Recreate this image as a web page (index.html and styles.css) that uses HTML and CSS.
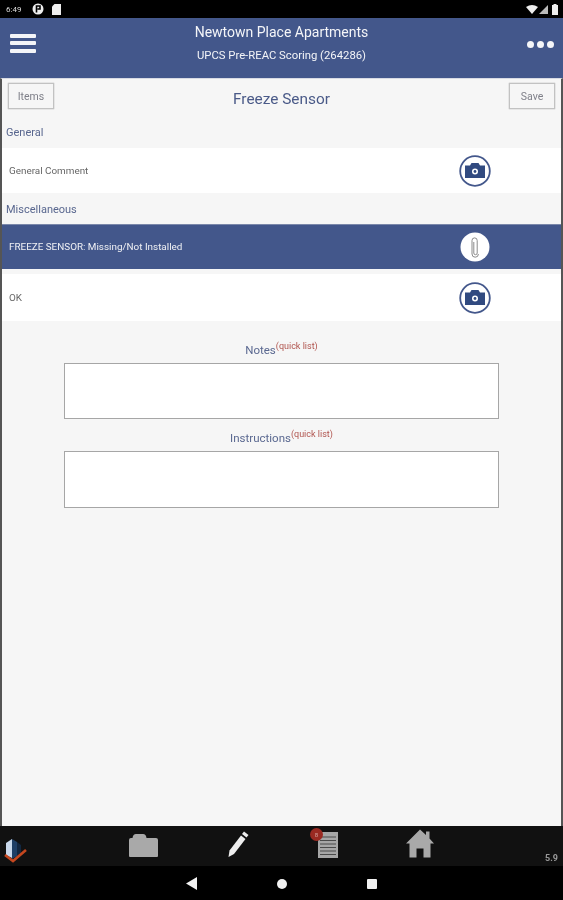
FILE: index.html
```html
<!DOCTYPE html>
<html lang="en">
<head>
<meta charset="utf-8">
<title>Freeze Sensor</title>
<link rel="stylesheet" href="styles.css">
</head>
<body>
<div class="screen">
  <div class="status">
    <span class="time">6:49</span>
    <svg class="st-p" viewBox="0 0 12 12"><circle cx="6" cy="6" r="5.5" fill="#eee"/><path d="M4.5 9.5V3H8v3H5.5" fill="none" stroke="#000" stroke-width="1.6"/></svg>
    <svg class="st-sd" viewBox="0 0 9 11"><path d="M2.5 0H9v11H0V2.5z" fill="#eee"/></svg>
    <span class="st-space"></span>
    <svg class="st-wifi" viewBox="0 0 12 9"><path d="M0 2Q6-2 12 2L6 9z" fill="#eee"/></svg>
    <svg class="st-cell" viewBox="0 0 9 9"><path d="M9 0V9H0z" fill="#bbb"/></svg>
    <svg class="st-batt" viewBox="0 0 6 11"><path d="M1.5 0h3v1H6v10H0V1h1.500z" fill="#eee"/></svg>
  </div>
  <header class="head">
    <div class="burger"><i></i><i></i><i></i></div>
    <div class="head-titles">
      <div class="head-title">Newtown Place Apartments</div>
      <div class="head-sub">UPCS Pre-REAC Scoring (264286)</div>
    </div>
    <div class="dots"><i></i><i></i><i></i></div>
  </header>
  <main class="content">
    <div class="toolbar">
      <div class="btn">Items</div>
      <div class="page-title">Freeze Sensor</div>
      <div class="btn">Save</div>
    </div>
    <div class="section sec-general">General</div>
    <div class="row row-general">
      <span class="row-text">General Comment</span>
      <svg class="ic" viewBox="0 0 32 32"><circle cx="16" cy="16" r="14.800" fill="#fff" stroke="#43578b" stroke-width="1.800"/><path d="M6 10.500h5l1.500-2.500h7l1.500 2.500h5V23H6z" fill="#314a80"/><circle cx="16" cy="16.500" r="3" fill="#fff"/><circle cx="16" cy="16.500" r="1.400" fill="#314a80"/></svg>
    </div>
    <div class="section sec-misc">Miscellaneous</div>
    <div class="row row-selected">
      <span class="row-text">FREEZE SENSOR: Missing/Not Installed</span>
      <svg class="ic" viewBox="0 0 32 32"><circle cx="16" cy="16" r="14.500" fill="#fff"/><path d="M14.500 10V21a1.700 1.700 0 0 0 3.400 0V8.500a2.600 2.600 0 0 0-5.200 0V22a3.200 3.200 0 0 0 6.400 0" transform="translate(0.300 1)" fill="none" stroke="#8a8a8a" stroke-width="1"/></svg>
    </div>
    <div class="row row-ok">
      <span class="row-text">OK</span>
      <svg class="ic" viewBox="0 0 32 32"><circle cx="16" cy="16" r="14.800" fill="#fff" stroke="#43578b" stroke-width="1.800"/><path d="M6 10.500h5l1.500-2.500h7l1.500 2.500h5V23H6z" fill="#314a80"/><circle cx="16" cy="16.500" r="3" fill="#fff"/><circle cx="16" cy="16.500" r="1.400" fill="#314a80"/></svg>
    </div>
    <div class="field field-notes">
      <div class="field-label">Notes<sup class="quick">(quick list)</sup></div>
      <div class="box box-notes"></div>
    </div>
    <div class="field field-instr">
      <div class="field-label">Instructions<sup class="quick">(quick list)</sup></div>
      <div class="box box-instr"></div>
    </div>
  </main>
  <footer class="tabs">
    <svg class="logo" viewBox="0 0 24 26"><path d="M2 18V6l6-4v19z" fill="#c9d8ea"/><path d="M8 2l5 3v14l-5 3z" fill="#1f3f66"/><path d="M13 5l4 3v8l-4 3z" fill="#12263f"/><path d="M1 18l8 6L22 13" fill="none" stroke="#c4471f" stroke-width="2.600"/></svg>
    <svg class="t-folder" viewBox="0 0 29 24"><path d="M2 5h1.500Q4 1 7 1h7q3 0 3.500 4H27q2 0 2 2v16q0 1-1 1H1q-1 0-1-1V7q0-2 2-2z" fill="#a9a9a9"/></svg>
    <svg class="t-pen" viewBox="0 0 24 28"><path d="M18 1.500l4.500 3.500-2 2.500L16 4z" fill="#eee"/><path d="M15 5.500l4.500 3.500L8 24l-5.500 3 1-6.500z" fill="#eee"/></svg>
    <div class="t-list">
      <svg class="t-doc" viewBox="0 0 20 26"><rect width="20" height="26" fill="#a6a6a6"/><path d="M2 5h16M2 8.500h16M2 12h16M2 15.500h16M2 19h16M2 22.500h16" stroke="#4a4a4a" stroke-width="1.200"/></svg>
      <span class="badge">8</span>
    </div>
    <svg class="t-home" viewBox="0 0 28 28"><path d="M14 0l6 5.500V2h3.500v7L28 14h-3.500v14H17.500v-9h-7v9H3.500V14H0z" fill="#a9a9a9"/></svg>
    <span class="version">5.9</span>
  </footer>
  <nav class="sysnav">
    <svg class="n-back" viewBox="0 0 11 13"><path d="M11 0v13L0 6.500z" fill="#f2f2f2"/></svg>
    <svg class="n-home" viewBox="0 0 10 10"><circle cx="5" cy="5" r="5" fill="#f2f2f2"/></svg>
    <svg class="n-recent" viewBox="0 0 10 10"><rect width="10" height="10" rx="1" fill="#f2f2f2"/></svg>
  </nav>
</div>
</body>
</html>
```
FILE: styles.css
```css
* { box-sizing: border-box; }
html, body { margin: 0; padding: 0; background: #000; }
body { font-family: Roboto, "Liberation Sans", sans-serif; }
.screen { width: 563px; height: 900px; display: flex; flex-direction: column; overflow: hidden; filter: blur(0.45px); }

.status { height: 18px; background: #000; display: flex; align-items: center; padding: 0 5px 0 6px; color: #ddd; font-size: 8px; }
.time { width: 20px; }
.st-p { width: 12px; height: 12px; margin-left: 6px; }
.st-sd { width: 9px; height: 11px; margin-left: 8px; }
.st-space { flex: 1; }
.st-wifi { width: 12px; height: 9px; }
.st-cell { width: 9px; height: 9px; margin-left: 1px; }
.st-batt { width: 6px; height: 11px; margin-left: 4px; }

.head { height: 60px; background: #43578b; display: flex; align-items: center; padding: 0 9px 0 10px; color: #f4f5f8; }
.burger { width: 26px; display: flex; flex-direction: column; gap: 3.500px; margin-top: -10px; }
.burger i { display: block; height: 4px; background: #f4f5f8; border-radius: 1px; }
.head-titles { flex: 1; text-align: center; margin-top: -10px; }
.head-title { font-size: 14px; line-height: 16px; }
.head-sub { font-size: 11.300px; line-height: 14px; margin-top: 9px; }
.dots { display: flex; gap: 3px; margin-top: -8px; }
.dots i { width: 7px; height: 7px; border-radius: 50%; background: #f4f5f8; }

.content { height: 748px; background: #f6f6f6; border-left: 2px solid #555; border-right: 2px solid #555; border-top: 1px solid #d8dbe4; }
.toolbar { height: 31px; display: flex; align-items: flex-start; justify-content: space-between; padding: 4px 6px 0; }
.btn { width: 46px; height: 26px; background: #f6f6f6; border: 1px solid #c2c2c2; box-shadow: 0 0 1px #999; color: #7e7f88; font-size: 10.500px; line-height: 25px; text-align: center; }
.page-title { font-size: 15.400px; line-height: 18px; margin-top: 7px; color: #4a5a88; }

.section { color: #59678f; font-size: 11px; padding-left: 4px; }
.sec-general { height: 38px; line-height: 14px; padding-top: 16px; }
.sec-misc { height: 31px; padding-top: 10px; line-height: 14px; }

.row { display: flex; align-items: center; justify-content: space-between; background: #fff; padding: 0 9px 0 7px; }
.row-text { font-size: 9.900px; color: #666; }
.row-general { height: 45px; }
.row-selected { height: 45px; background: #43578b; border-top: 1px solid #7b88aa; }
.row-selected .row-text { color: #f0f1f5; margin-top: -2px; }
.row-ok { height: 47px; margin-top: 5px; }
.ic { width: 32px; height: 32px; margin-right: 61px; }

.field { display: flex; flex-direction: column; align-items: center; }
.field-notes { margin-top: 20px; }
.field-instr { margin-top: 10px; }
.field-label { font-size: 11.500px; line-height: 14px; height: 22px; padding-top: 2px; color: #5a6890; }
.quick { font-size: 9px; color: #b0544e; line-height: 0; vertical-align: 5px; }
.box { width: 435px; background: #fff; border: 1.500px solid #a6a6a6; }
.box-notes { height: 56px; }
.box-instr { height: 57px; }

.tabs { height: 40px; background: #111; position: relative; }
.logo { position: absolute; left: 4px; top: 11px; width: 24px; height: 26px; }
.t-folder { position: absolute; left: 129px; top: 7px; width: 29px; height: 24px; }
.t-pen { position: absolute; left: 226px; top: 4px; width: 24px; height: 28px; }
.t-list { position: absolute; left: 316px; top: 6px; width: 22px; height: 26px; }
.t-doc { position: absolute; right: 0; top: 0; width: 20px; height: 26px; }
.badge { position: absolute; left: -6px; top: -4px; width: 13px; height: 13px; border-radius: 50%; background: #9a2a22; color: #d8a5a0; font-size: 6px; line-height: 13px; text-align: center; }
.t-home { position: absolute; left: 406px; top: 3px; width: 28px; height: 29px; }
.version { position: absolute; right: 5px; bottom: 3px; font-size: 9px; font-weight: 700; color: #999; }

.sysnav { height: 34px; background: #000; position: relative; }
.n-back { position: absolute; left: 186px; top: 11px; width: 11px; height: 13px; }
.n-home { position: absolute; left: 277px; top: 13px; width: 10px; height: 10px; }
.n-recent { position: absolute; left: 367px; top: 13px; width: 10px; height: 10px; }
```
